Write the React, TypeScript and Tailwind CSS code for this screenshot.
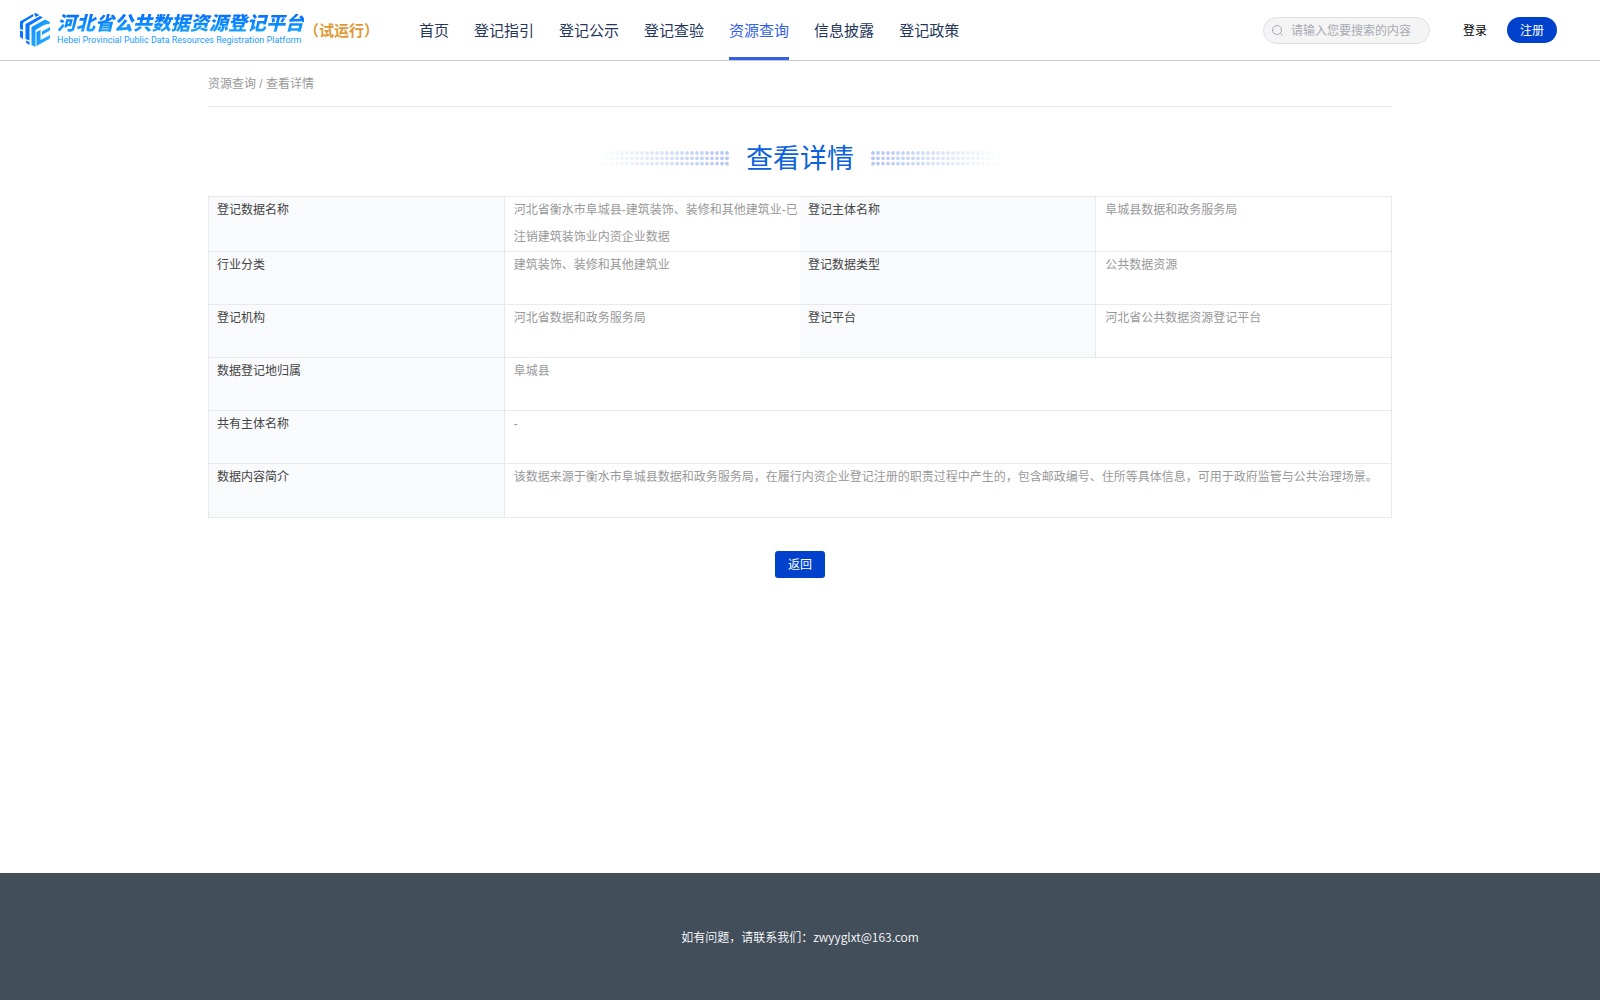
import React from "react";

const navItems = ["首页", "登记指引", "登记公示", "登记查验", "资源查询", "信息披露", "登记政策"];
const activeItem = "资源查询";

const pairRows = [
  ["登记数据名称", "河北省衡水市阜城县-建筑装饰、装修和其他建筑业-已注销建筑装饰业内资企业数据", "登记主体名称", "阜城县数据和政务服务局"],
  ["行业分类", "建筑装饰、装修和其他建筑业", "登记数据类型", "公共数据资源"],
  ["登记机构", "河北省数据和政务服务局", "登记平台", "河北省公共数据资源登记平台"],
];

const fullRows = [
  ["数据登记地归属", "阜城县"],
  ["共有主体名称", "-"],
  ["数据内容简介", "该数据来源于衡水市阜城县数据和政务服务局，在履行内资企业登记注册的职责过程中产生的，包含邮政编号、住所等具体信息，可用于政府监管与公共治理场景。"],
];

function LogoMark() {
  return (
    <svg width="30" height="34" viewBox="0 0 30 34" className="shrink-0" aria-hidden="true">
      <defs>
        <linearGradient id="mark" x1="0" y1="0" x2="1" y2="1">
          <stop offset="0" stopColor="#0a8cff" />
          <stop offset="1" stopColor="#35b8ff" />
        </linearGradient>
      </defs>
      <g fill="#0a74ff">
        <path d="M0 8.5 L13 1 L13.5 3.2 L4 9 L3 10.5 L3 17 L0 16 Z" />
        <path d="M14.2 0.6 L15.5 0 L19.5 2 L15.5 4 Z" />
        <path d="M0 17.5 L3 18.5 L3 26 L0 24 Z" />
        <path d="M5.5 11 L20 3 L23 4.5 L9.5 12.5 L9.5 27.5 L5.5 26 Z" />
        <path d="M6 27.5 L9.5 29 L9.5 32 L6 29.8 Z" />
      </g>
      <g fill="url(#mark)">
        <path d="M11.5 14 L25 6.5 L30 9 L30 10.5 L24 12 L15.5 17 L15.5 34 L11.5 32 Z" />
        <path d="M16.5 19 L20.5 17 L20.5 27 L30 22 L30 25.5 L16.5 33 Z" />
        <path d="M22 18.5 L30 14 L30 17.5 L22 22 Z" />
      </g>
    </svg>
  );
}

function Logo() {
  return (
    <a href="#" className="flex shrink-0 items-center gap-[7px]">
      <LogoMark />
      <span className="flex flex-col">
        <span className="bg-linear-to-b from-[#0a6cff] to-[#1ea6ff] bg-clip-text font-['Liberation_Sans','Noto_Sans_CJK_SC',sans-serif] text-[19px] leading-5 font-black whitespace-nowrap text-transparent italic">
          河北省公共数据资源登记平台
        </span>
        <span className="font-[Roboto,sans-serif] text-[9px] leading-3 whitespace-nowrap text-[#1e9bff]">
          Hebei Provincial Public Data Resources Registration Platform
        </span>
      </span>
    </a>
  );
}

function Header() {
  return (
    <header className="flex h-[61px] items-center border-b border-[#c8c8c8] pr-[43px] pl-5 font-['Noto_Sans_CJK_SC',sans-serif]">
      <Logo />
      <span className="shrink-0 text-[15px] font-bold text-[#e09a35]">（试运行）</span>
      <nav className="ml-10 flex h-full gap-[25px]">
        {navItems.map((item) => (
          <a
            key={item}
            href="#"
            className={
              item === activeItem
                ? "flex items-center border-y-3 border-t-transparent border-b-[#3160e6] text-[15px] whitespace-nowrap text-[#3160e6]"
                : "flex items-center text-[15px] whitespace-nowrap text-[#24365a]"
            }>
            {item}
          </a>
        ))}
      </nav>
      <div className="ml-auto flex items-center text-xs">
        <label className="flex h-[27px] w-[167px] items-center gap-2 rounded-full border border-[#dcdfe6] bg-[#f4f4f4] pl-2">
          <svg width="11" height="11" viewBox="0 0 11 11" fill="none" stroke="#a8abb2" className="shrink-0" aria-hidden="true">
            <circle cx="5" cy="5" r="4.5" />
            <path d="M8.3 8.3 L10.6 10.6" />
          </svg>
          <input
            type="text"
            aria-label="搜索"
            className="w-full min-w-0 outline-none placeholder:text-[#a8abb2]"
            placeholder="请输入您要搜索的内容"
          />
        </label>
        <button type="button" className="ml-[33px] text-black">
          登录
        </button>
        <button type="button" className="ml-5 h-[26px] w-[50px] rounded-full bg-[#0042cc] text-white">
          注册
        </button>
      </div>
    </header>
  );
}

function Dots({ flip }: { flip?: boolean }) {
  const cols = Array.from({ length: 26 }, (_, i) => i);
  return (
    <svg width="132" height="17" viewBox="0 0 132 17" fill="#b4c8f2" className={flip ? "-scale-x-100" : ""} aria-hidden="true">
      {cols.map((i) =>
        [2, 7.3, 12.6].map((y) => <circle key={`${i}-${y}`} cx={5 + i * 5} cy={y} r="1.9" opacity={(i + 1) / 26} />)
      )}
    </svg>
  );
}

function DetailTable() {
  const labelCell = "border-y border-[#e8e9eb] bg-[#f9fafc] px-2 text-left align-top font-normal text-[#444]";
  const valueCell = "border-y border-l border-[#e8e9eb] pl-[9px] text-left align-top text-[#999]";
  return (
    <table className="w-full table-fixed border-collapse border border-[#e8e9eb] text-xs leading-[27px]">
      <tbody>
        {pairRows.map(([label, value, label2, value2]) => (
          <tr key={label} className="h-[53px]">
            <th scope="row" className={labelCell}>{label}</th>
            <td className={valueCell}>{value}</td>
            <th scope="row" className={labelCell}>{label2}</th>
            <td className={valueCell}>{value2}</td>
          </tr>
        ))}
        {fullRows.map(([label, value]) => (
          <tr key={label} className="h-[53px] last:h-[54px]">
            <th scope="row" className={labelCell}>{label}</th>
            <td colSpan={3} className={valueCell}>{value}</td>
          </tr>
        ))}
      </tbody>
    </table>
  );
}

function App() {
  return (
    <div className="flex min-h-screen flex-col bg-white font-['Liberation_Sans','Noto_Sans_CJK_SC',sans-serif]">
      <Header />
      <main className="mx-auto w-full max-w-[1184px] flex-1">
        <div className="flex h-[46px] items-center border-b border-[#e8e9eb] text-xs text-[#999]">
          资源查询 / 查看详情
        </div>
        <div className="mt-[34px] mb-[18px] flex items-center justify-center gap-[17px]">
          <Dots />
          <h1 className="text-[27px] leading-[37px] text-[#0b62dc]">查看详情</h1>
          <Dots flip />
        </div>
        <DetailTable />
        <div className="mt-[33px] flex justify-center">
          <button type="button" className="h-[27px] w-[50px] rounded-[3px] bg-[#0042cc] text-xs text-white">
            返回
          </button>
        </div>
      </main>
      <footer className="flex h-[127px] items-center justify-center bg-[#424e5a] font-['Noto_Sans_CJK_SC',sans-serif] text-xs font-[350] text-white">
        如有问题，请联系我们：zwyyglxt@163.com
      </footer>
    </div>
  );
}

export default App;
